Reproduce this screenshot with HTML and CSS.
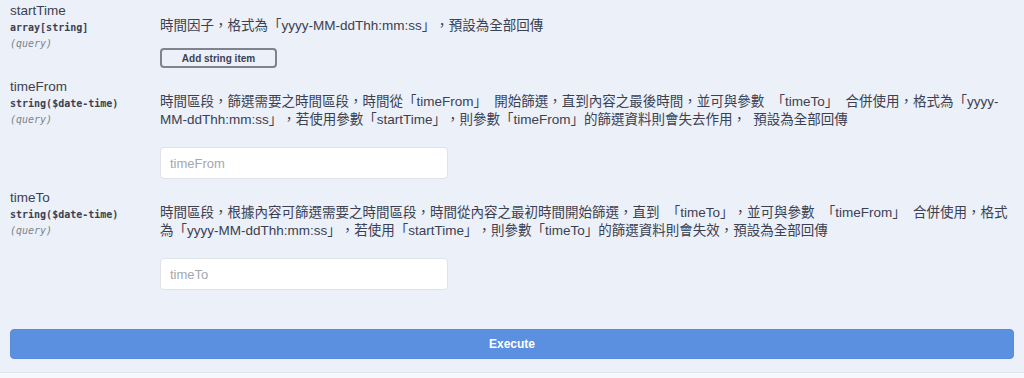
FILE: index.html
```html
<!DOCTYPE html>
<html lang="zh-Hant">
<head>
<meta charset="utf-8">
<title>Parameters</title>
<link rel="stylesheet" href="styles.css">
</head>
<body>
<div class="opblock">
  <div class="params">
    <div class="param">
      <div class="param-name">
        <div class="name">startTime</div>
        <div class="type">array[string]</div>
        <div class="in">(query)</div>
      </div>
      <div class="param-desc">
        <p class="desc-text">時間因子，格式為「yyyy-MM-ddThh:mm:ss」，預設為全部回傳</p>
        <button class="add-btn" type="button">Add string item</button>
      </div>
    </div>
    <div class="param">
      <div class="param-name">
        <div class="name">timeFrom</div>
        <div class="type">string($date-time)</div>
        <div class="in">(query)</div>
      </div>
      <div class="param-desc">
        <p class="desc-text">時間區段，篩選需要之時間區段，時間從「timeFrom」 開始篩選，直到內容之最後時間，並可與參數 「timeTo」 合併使用，格式為「yyyy-MM-ddThh:mm:ss」，若使用參數「startTime」，則參數「timeFrom」的篩選資料則會失去作用， 預設為全部回傳</p>
        <input class="text-input" type="text" placeholder="timeFrom">
      </div>
    </div>
    <div class="param">
      <div class="param-name">
        <div class="name">timeTo</div>
        <div class="type">string($date-time)</div>
        <div class="in">(query)</div>
      </div>
      <div class="param-desc">
        <p class="desc-text">時間區段，根據內容可篩選需要之時間區段，時間從內容之最初時間開始篩選，直到 「timeTo」，並可與參數 「timeFrom」 合併使用，格式為「yyyy-MM-ddThh:mm:ss」，若使用「startTime」，則參數「timeTo」的篩選資料則會失效，預設為全部回傳</p>
        <input class="text-input" type="text" placeholder="timeTo">
      </div>
    </div>
  </div>
  <div class="execute-wrap">
    <button class="execute" type="button">Execute</button>
  </div>
</div>
</body>
</html>
```

FILE: styles.css
```css
html, body {
  margin: 0;
  padding: 0;
  background: #f6f8fc;
}

body {
  font-family: "Liberation Sans", Arial, "Noto Sans CJK TC", sans-serif;
  color: #3b4151;
}

.opblock {
  background: #ebf0f9;
  border-bottom: 1px solid #dfe5ee;
  height: 373px;
  box-sizing: border-box;
}

.params {
  padding-top: 2px;
}

.param {
  display: flex;
  padding: 0 10px 10px;
}

.param-name {
  width: 150px;
  flex: none;
}

.name {
  font-size: 13.5px;
  line-height: 18px;
}

.type {
  font-family: "DejaVu Sans Mono", "Liberation Mono", monospace;
  font-weight: bold;
  font-size: 10px;
  line-height: 16px;
  color: #3b4151;
}

.in {
  font-family: "DejaVu Sans Mono", "Liberation Mono", monospace;
  font-style: italic;
  font-size: 10px;
  line-height: 16px;
  color: #7e828b;
}

.param-desc {
  flex: 1;
  min-width: 0;
  padding-top: 15px;
}

.desc-text {
  margin: 0;
  font-size: 13.5px;
  line-height: 18px;
  word-spacing: 3.5px;
  text-spacing-trim: space-all;
}

.add-btn {
  display: block;
  margin-top: 13px;
  width: 117px;
  height: 20px;
  padding: 0;
  box-sizing: border-box;
  border: 2px solid #7f838d;
  border-radius: 4px;
  background: transparent;
  font-family: "Liberation Sans", Arial, sans-serif;
  font-weight: bold;
  font-size: 10px;
  color: #3b4151;
}

.text-input {
  display: block;
  margin-top: 18px;
  width: 288px;
  height: 32px;
  box-sizing: border-box;
  padding: 0 9px;
  border: 1px solid #dfe2e8;
  border-radius: 4px;
  background: #fff;
  font-family: "Liberation Sans", Arial, sans-serif;
  font-size: 13px;
  color: #3b4151;
  outline: none;
}

.text-input::placeholder {
  color: #a4a7ad;
}

.execute-wrap {
  padding: 29px 10px 0;
}

.execute {
  display: block;
  width: 100%;
  height: 30px;
  box-sizing: border-box;
  border: 1px solid #5a8cdb;
  border-radius: 4px;
  background: #5b8fdf;
  color: #fff;
  font-family: "Liberation Sans", Arial, sans-serif;
  font-weight: bold;
  font-size: 12px;
}
```
